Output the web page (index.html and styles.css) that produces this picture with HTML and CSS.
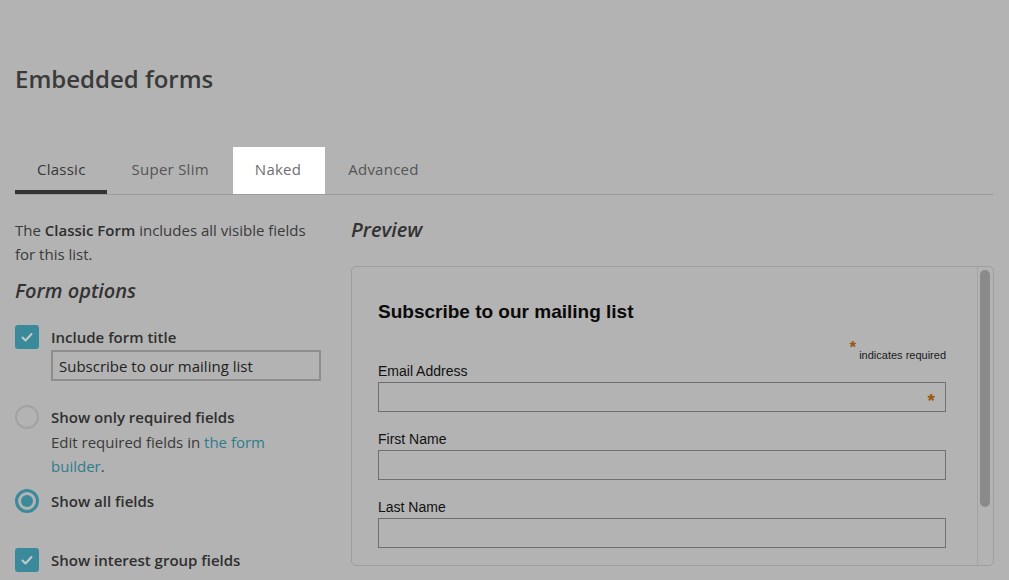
FILE: index.html
```html
<!DOCTYPE html>
<html lang="en">
<head>
<meta charset="utf-8">
<title>Embedded forms</title>
<link rel="stylesheet" href="styles.css">
</head>
<body>
<div class="page">
  <h1 class="title">Embedded forms</h1>
  <nav class="tabs">
    <a class="tab is-active">Classic</a>
    <a class="tab tab-wide">Super Slim</a>
    <a class="tab is-highlight">Naked</a>
    <a class="tab">Advanced</a>
  </nav>
  <div class="content">
    <aside class="options">
      <p class="intro">The <strong>Classic Form</strong> includes all visible fields for this list.</p>
      <h2 class="section-title">Form options</h2>

      <div class="option option-first">
        <span class="checkbox"><svg viewBox="0 0 24 24" width="24" height="24"><path d="M7.5 12.5l3 3 6-6.5" fill="none" stroke="#c4cacc" stroke-width="2" stroke-linecap="round" stroke-linejoin="round"/></svg></span>
        <span class="option-label">Include form title</span>
      </div>
      <div class="option-extra">
        <input class="text-input" type="text" value="Subscribe to our mailing list">
      </div>

      <div class="option option-radio1">
        <span class="radio"></span>
        <span class="option-label">Show only required fields</span>
      </div>
      <p class="help">Edit required fields in <a class="link">the form builder</a>.</p>

      <div class="option option-radio2">
        <span class="radio is-checked"><span class="radio-dot"></span></span>
        <span class="option-label">Show all fields</span>
      </div>

      <div class="option option-groups">
        <span class="checkbox"><svg viewBox="0 0 24 24" width="24" height="24"><path d="M7.5 12.5l3 3 6-6.5" fill="none" stroke="#c4cacc" stroke-width="2" stroke-linecap="round" stroke-linejoin="round"/></svg></span>
        <span class="option-label">Show interest group fields</span>
      </div>
    </aside>

    <section class="preview">
      <h2 class="section-title">Preview</h2>
      <div class="preview-box">
        <div class="embed">
          <h2 class="embed-title">Subscribe to our mailing list</h2>
          <div class="indicates"><span class="asterisk">*</span> indicates required</div>
          <div class="field">
            <label class="field-label">Email Address</label>
            <div class="field-input"><span class="field-asterisk">*</span></div>
          </div>
          <div class="field">
            <label class="field-label">First Name</label>
            <div class="field-input"></div>
          </div>
          <div class="field">
            <label class="field-label">Last Name</label>
            <div class="field-input"></div>
          </div>
        </div>
        <div class="scrollbar"><div class="thumb"></div></div>
      </div>
    </section>
  </div>
</div>
</body>
</html>
```

FILE: styles.css
```css
* { box-sizing: border-box; }

html, body {
  margin: 0;
  padding: 0;
  background: #b3b3b3;
}

body {
  font-family: "Open Sans", "Liberation Sans", sans-serif;
  color: #3a3a3a;
  overflow: hidden;
  height: 580px;
}

.page {
  padding: 0 15px;
}

.title {
  margin: 61px 0 0;
  font-size: 24px;
  line-height: 36px;
  font-weight: 600;
  color: #3a3a3a;
}

.tabs {
  display: flex;
  margin-top: 50px;
  border-bottom: 1px solid #9c9c9c;
}

.tab {
  display: block;
  height: 47px;
  line-height: 45px;
  padding: 0 23px 0 23px;
  font-size: 15px;
  letter-spacing: 0.25px;
  font-weight: 500;
  color: #555;
}

.tab.tab-wide {
  padding: 0 24px 0 25px;
}

.tab.is-active {
  color: #383838;
  padding: 0 21px 0 22px;
  box-shadow: inset 0 -4px 0 #333;
}

.tab.is-highlight {
  background: #fff;
  color: #6f6f6f;
  padding: 0 24px 0 22px;
}

.content {
  display: grid;
  grid-template-columns: 306px 1fr;
  column-gap: 30px;
  margin-top: 21px;
}

.intro {
  margin: 2px 0 0;
  font-size: 15px;
  line-height: 24px;
  color: #3a3a3a;
}

.intro strong {
  font-weight: 600;
  color: #2e2e2e;
}

.section-title {
  margin: 0;
  font-size: 20px;
  line-height: 28px;
  font-style: italic;
  font-weight: 600;
  color: #333;
}

.options .section-title {
  margin-top: 11px;
}

.option {
  display: flex;
  align-items: center;
  gap: 12px;
  height: 24px;
}

.option-first { margin-top: 20px; }
.option-radio1 { margin-top: 24px; }
.option-radio2 { margin-top: 11px; }
.option-groups { margin-top: 35px; }

.option-label {
  font-size: 15px;
  line-height: 22px;
  font-weight: 600;
  color: #2f2f2f;
}

.checkbox {
  flex: none;
  width: 24px;
  height: 24px;
  border-radius: 3px;
  background: #3b8a9b;
}

.checkbox svg { display: block; }

.radio {
  flex: none;
  width: 24px;
  height: 24px;
  border-radius: 50%;
  border: 2px solid #a2a2a2;
  display: flex;
  align-items: center;
  justify-content: center;
}

.radio.is-checked {
  border: 3px solid #3b8a9b;
}

.radio-dot {
  width: 12px;
  height: 12px;
  border-radius: 50%;
  background: #3b8a9b;
}

.option-extra {
  padding-left: 36px;
  margin-top: 1px;
}

.text-input {
  display: block;
  width: 100%;
  height: 31px;
  border: 2px solid #8d8d8d;
  border-radius: 1px;
  background: #b3b3b3;
  padding: 0 6px;
  font-family: "Open Sans", sans-serif;
  font-size: 15px;
  color: #222;
  outline: none;
}

.help {
  margin: 1px 0 0;
  padding-left: 36px;
  max-width: 280px;
  font-size: 15px;
  line-height: 24px;
  color: #3a3a3a;
}

.link {
  color: #2f7d8c;
}

.preview-box {
  display: flex;
  margin-top: 22px;
  height: 300px;
  border: 1px solid #9e9e9e;
  border-radius: 5px;
  overflow: hidden;
}

.embed {
  flex: 1;
  padding: 33px 31px 0 26px;
  font-family: "Liberation Sans", Arial, sans-serif;
  color: #111;
}

.embed-title {
  margin: 0;
  font-size: 19px;
  line-height: 23px;
  font-weight: 700;
  color: #0a0a0a;
}

.indicates {
  margin-top: 24px;
  text-align: right;
  font-size: 11px;
  line-height: 14px;
  color: #1a1a1a;
}

.asterisk {
  position: relative;
  top: -6px;
  font-size: 17px;
  font-weight: 700;
  color: #9b560b;
}

.field {
  position: relative;
  margin-top: 1px;
}

.field + .field { margin-top: 19px; }

.field-label {
  display: block;
  font-size: 14px;
  line-height: 16px;
  color: #111;
}

.field-input {
  margin-top: 3px;
  height: 30px;
  border: 1px solid #6f6f6f;
  display: flex;
  align-items: center;
  justify-content: flex-end;
  padding-right: 10px;
}

.field-asterisk {
  font-size: 19px;
  font-weight: 700;
  color: #9b560b;
  line-height: 1;
  padding-top: 7px;
}

.scrollbar {
  flex: none;
  width: 16px;
  border-left: 1px solid #a4a4a4;
  padding: 3px 2px 0 2px;
}

.thumb {
  width: 10px;
  height: 237px;
  border-radius: 5px;
  background: #8a8a8a;
}
```
